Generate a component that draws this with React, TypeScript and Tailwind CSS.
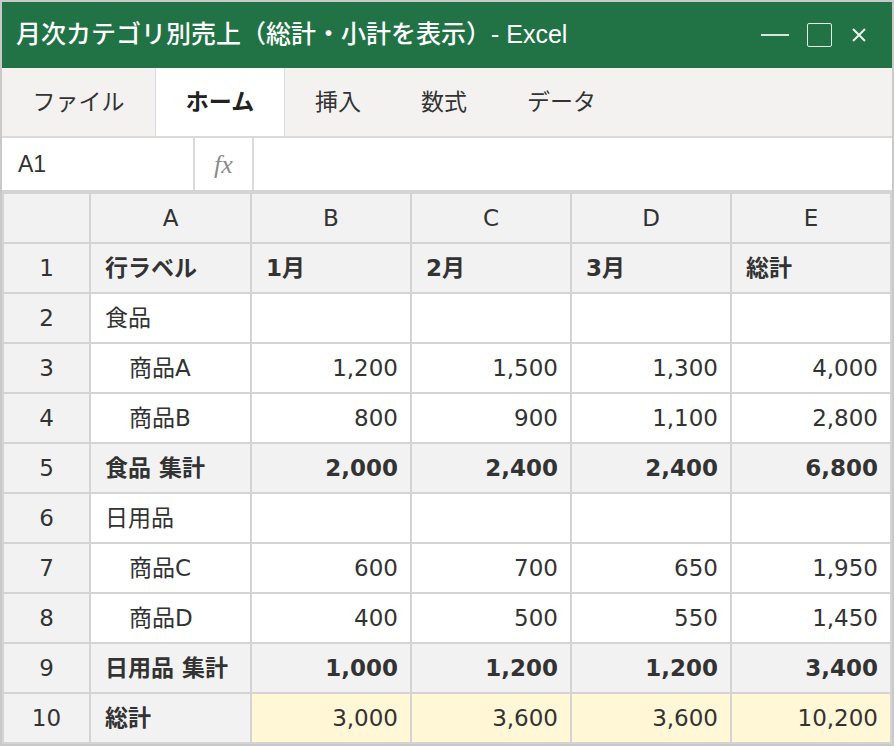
import React from "react";

type Row = {
  num: string;
  label: string;
  values: string[];
  kind: "head" | "group" | "item" | "subtotal" | "total";
};

const rows: Row[] = [
  { num: "1", label: "行ラベル", values: ["1月", "2月", "3月", "総計"], kind: "head" },
  { num: "2", label: "食品", values: ["", "", "", ""], kind: "group" },
  { num: "3", label: "商品A", values: ["1,200", "1,500", "1,300", "4,000"], kind: "item" },
  { num: "4", label: "商品B", values: ["800", "900", "1,100", "2,800"], kind: "item" },
  { num: "5", label: "食品 集計", values: ["2,000", "2,400", "2,400", "6,800"], kind: "subtotal" },
  { num: "6", label: "日用品", values: ["", "", "", ""], kind: "group" },
  { num: "7", label: "商品C", values: ["600", "700", "650", "1,950"], kind: "item" },
  { num: "8", label: "商品D", values: ["400", "500", "550", "1,450"], kind: "item" },
  { num: "9", label: "日用品 集計", values: ["1,000", "1,200", "1,200", "3,400"], kind: "subtotal" },
  { num: "10", label: "総計", values: ["3,000", "3,600", "3,600", "10,200"], kind: "total" },
];

const sans = "font-['Liberation_Sans','Noto_Sans_CJK_JP',sans-serif]";
const cellFont = "font-['DejaVu_Sans','Noto_Sans_CJK_JP',sans-serif]";

export default function App() {
  return (
    <div className={`h-[746px] w-[894px] bg-[#c9c9c9] px-[2px] pt-[2px] pb-[2px] text-[#333] ${sans}`}>
      {/* title bar */}
      <div className="flex h-[66px] items-center justify-between bg-[#217346] pl-[14px] pr-[26px] text-white">
        <span className="text-[25px] font-medium">月次カテゴリ別売上（総計・小計を表示）- Excel</span>
        <div className="flex items-center">
          <div className="h-[2px] w-[28px] bg-[#d9e3dc]" />
          <div className="ml-[18px] h-[24px] w-[25px] rounded-[2px] border-[1.5px] border-[#e3ebe5]" />
          <svg width="14" height="14" viewBox="0 0 14 14" className="ml-[20px]">
            <path d="M1 1L13 13M13 1L1 13" stroke="#eef2ef" strokeWidth="2" />
          </svg>
        </div>
      </div>

      {/* ribbon tabs */}
      <div className="flex h-[70px] border-b-2 border-[#dadada] bg-[#f3f2f1] text-[23px]">
        <div className="flex w-[153px] items-center justify-center">ファイル</div>
        <div className="flex w-[130px] items-center justify-center border-x border-[#dcdcdc] bg-white font-bold text-[#222]">
          ホーム
        </div>
        <div className="flex items-center pl-[30px]">挿入</div>
        <div className="flex items-center pl-[60px]">数式</div>
        <div className="flex items-center pl-[60px]">データ</div>
      </div>

      {/* formula bar */}
      <div className="flex h-[56px] border-b-4 border-[#d4d4d4] bg-white">
        <div className="flex w-[193px] items-center border-r-2 border-[#dadada] pl-[16px] text-[23px]">A1</div>
        <div className="flex w-[59px] items-center justify-center border-r-2 border-[#dadada] font-['Liberation_Serif',serif] text-[26px] italic text-[#8c8c8c]">
          fx
        </div>
        <div className="flex-1" />
      </div>

      {/* sheet grid */}
      <div
        className={`grid grid-cols-[85px_159px_158px_158px_158px_158px] gap-[2px] bg-[#d4d4d4] px-[2px] pb-[2px] text-[23px] ${cellFont}`}
      >
        {["", "A", "B", "C", "D", "E"].map((c, i) => (
          <div key={"h" + i} className="flex h-[48px] items-center justify-center bg-[#f2f2f2]">
            {c}
          </div>
        ))}
        {rows.map((r) => {
          const grey = r.kind === "head" || r.kind === "subtotal";
          const boldLabel = grey || r.kind === "total";
          return (
            <React.Fragment key={r.num}>
              <div className="flex h-[48px] items-center justify-center bg-[#f2f2f2]">{r.num}</div>
              <div
                className={`flex h-[48px] items-center ${r.kind === "item" ? "pl-[38px]" : "pl-[14px]"} ${
                  boldLabel ? "bg-[#f2f2f2] font-bold" : "bg-white"
                }`}
              >
                {r.label}
              </div>
              {r.values.map((v, j) => (
                <div
                  key={j}
                  className={`flex h-[48px] items-center ${
                    r.kind === "head" ? "pl-[14px]" : "justify-end pr-[12px]"
                  } ${grey ? "bg-[#f2f2f2] font-bold" : r.kind === "total" ? "bg-[#fff7d6]" : "bg-white"}`}
                >
                  {v}
                </div>
              ))}
            </React.Fragment>
          );
        })}
      </div>
    </div>
  );
}
